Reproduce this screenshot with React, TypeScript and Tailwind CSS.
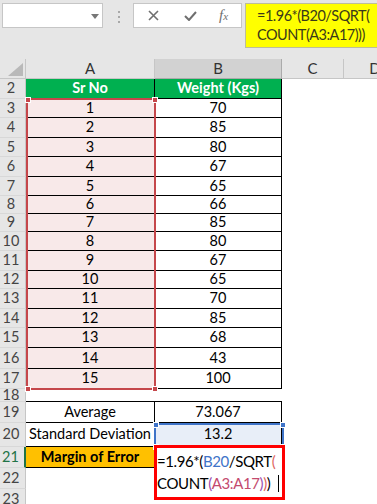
import React from 'react';

const data = [
  { n: 3, h: 19, a: '1', b: '70' },
  { n: 4, h: 20, a: '2', b: '85' },
  { n: 5, h: 19, a: '3', b: '80' },
  { n: 6, h: 20, a: '4', b: '67' },
  { n: 7, h: 19, a: '5', b: '65' },
  { n: 8, h: 18, a: '6', b: '66' },
  { n: 9, h: 18, a: '7', b: '85' },
  { n: 10, h: 19, a: '8', b: '80' },
  { n: 11, h: 20, a: '9', b: '67' },
  { n: 12, h: 18, a: '10', b: '65' },
  { n: 13, h: 20, a: '11', b: '70' },
  { n: 14, h: 19, a: '12', b: '85' },
  { n: 15, h: 20, a: '13', b: '68' },
  { n: 16, h: 21, a: '14', b: '43' },
  { n: 17, h: 20, a: '15', b: '100' },
];

function RowHead({ n, green }: { n: number; green?: boolean }) {
  return (
    <div
      className={`flex h-full w-[26px] shrink-0 items-center justify-center overflow-hidden border-b border-b-[#d8d8d8] bg-[#e6e6e6] pr-[3px] ${
        green ? 'border-r-2 border-r-[#217346] text-[#217346]' : 'border-r border-r-[#c6c6c6] text-[#444]'
      }`}
    >
      {n}
    </div>
  );
}

function Handle({ className }: { className: string }) {
  return <div className={`absolute h-[6px] w-[6px] border border-white ${className}`} />;
}

export default function App() {
  return (
    <div className="relative h-[504px] w-[377px] overflow-hidden bg-white font-[family-name:Lato,'Noto_Sans',sans-serif] text-[14.5px] leading-none text-black">
      {/* formula bar strip */}
      <div className="flex h-[59px] items-start bg-[#e6e6e6] pl-[2px] pt-[3px]">
        <div className="relative h-[25px] w-[101px] shrink-0 border border-[#c6c6c6] bg-white">
          <svg className="absolute left-[88px] top-[10px]" width="8" height="5" viewBox="0 0 8 5">
            <polygon points="0,0 8,0 4,5" fill="#777" />
          </svg>
        </div>
        <div className="ml-[15px] mt-[8px] flex shrink-0 flex-col gap-[3px]">
          <span className="h-[2px] w-[2px] bg-[#a8a8a8]" />
          <span className="h-[2px] w-[2px] bg-[#a8a8a8]" />
          <span className="h-[2px] w-[2px] bg-[#a8a8a8]" />
        </div>
        <div className="ml-[13px] flex h-[25px] w-[109px] shrink-0 items-center border border-[#c6c6c6] bg-white">
          <svg className="ml-[14px]" width="11" height="11" viewBox="0 0 11 11">
            <path d="M1 1 L10 10 M10 1 L1 10" stroke="#6f6f6f" strokeWidth="1.6" />
          </svg>
          <svg className="ml-[25px]" width="13" height="10" viewBox="0 0 13 10">
            <path d="M1 5 L5 9 L12 1" stroke="#6f6f6f" strokeWidth="2" fill="none" />
          </svg>
          <span className="ml-[22px] font-[family-name:'Liberation_Serif',serif] text-[15px] italic text-[#6f6f6f]">
            f<span className="text-[11px]">x</span>
          </span>
        </div>
        <div className="ml-[3px] flex h-[45px] min-w-0 flex-1 flex-col justify-center gap-[5px] whitespace-nowrap border border-r-0 border-[#bdbd9a] bg-[#ffff00] pl-[11px] text-[14.5px] tracking-[-0.5px] text-[#3a3a1a]">
          <span>=1.96*(B20/SQRT(</span>
          <span>COUNT(A3:A17)))</span>
        </div>
      </div>

      {/* column headers */}
      <div className="flex h-[20px] bg-[#e6e6e6] text-[15px] text-[#333]">
        <div className="relative w-[26px] shrink-0 border-r border-b border-[#c6c6c6]">
          <svg className="absolute left-0 top-0" width="26" height="20" viewBox="0 0 26 20">
            <polygon points="8,17 23,17 23,4" fill="#b9b9b9" />
          </svg>
        </div>
        <div className="flex w-[129px] shrink-0 items-center justify-center border-r border-b border-[#c6c6c6]">A</div>
        <div className="flex w-[127px] shrink-0 items-center justify-center border-r border-b border-[#ababab] bg-[#d2d2d2]">B</div>
        <div className="flex w-[62px] shrink-0 items-center justify-center border-r border-b border-[#c6c6c6]">C</div>
        <div className="flex w-[62px] shrink-0 items-center justify-center border-b border-[#c6c6c6]">D</div>
      </div>

      {/* row 2 header */}
      <div className="flex h-[20px]">
        <RowHead n={2} />
        <div className="flex w-[129px] shrink-0 items-center justify-center border-r border-b border-black bg-[#00b050] font-bold text-white">
          Sr No
        </div>
        <div className="flex w-[127px] shrink-0 items-center justify-center border-r border-b border-black bg-[#00b050] font-bold text-white">
          Weight (Kgs)
        </div>
      </div>

      {data.map((r) => (
        <div key={r.n} className="flex" style={{ height: r.h }}>
          <RowHead n={r.n} />
          <div className="flex w-[129px] shrink-0 items-center justify-center border-r border-b border-black bg-[#f8e9e9]">
            {r.a}
          </div>
          <div className="flex w-[127px] shrink-0 items-center justify-center border-r border-b border-black">{r.b}</div>
        </div>
      ))}

      {/* row 18 */}
      <div className="flex h-[13px]">
        <RowHead n={18} />
        <div className="w-[256px] shrink-0 border-b border-black" />
      </div>

      {/* row 19 */}
      <div className="flex h-[21px]">
        <RowHead n={19} />
        <div className="flex w-[129px] shrink-0 items-center justify-center border-r border-b border-black">Average</div>
        <div className="flex w-[127px] shrink-0 items-center justify-center border-r border-b border-black">73.067</div>
      </div>

      {/* row 20 */}
      <div className="flex h-[24px]">
        <RowHead n={20} />
        <div className="flex w-[129px] shrink-0 items-center justify-center whitespace-nowrap border-r border-b border-black">
          Standard Deviation
        </div>
        <div className="flex w-[127px] shrink-0 items-center justify-center border-r border-b border-black bg-[#e8eef8]">13.2</div>
      </div>

      {/* row 21 */}
      <div className="flex h-[21px]">
        <RowHead n={21} green />
        <div className="flex w-[129px] shrink-0 items-center justify-center border-r border-b border-black bg-[#ffc000] font-bold">
          Margin of Error
        </div>
      </div>

      {/* rows 22, 23 */}
      <div className="flex h-[21px]">
        <RowHead n={22} />
      </div>
      <div className="flex h-[21px]">
        <RowHead n={23} />
      </div>

      {/* reference highlight A3:A17 */}
      <div className="pointer-events-none absolute left-[26px] top-[98px] h-[292px] w-[130px] border-2 border-[#c5474b]">
        <Handle className="-left-[3px] -top-[3px] bg-[#c5474b]" />
        <Handle className="-right-[4px] -top-[3px] bg-[#c5474b]" />
        <Handle className="-left-[3px] -bottom-[4px] bg-[#c5474b]" />
        <Handle className="-right-[4px] -bottom-[4px] bg-[#c5474b]" />
      </div>

      {/* reference highlight B20 */}
      <div className="pointer-events-none absolute left-[154px] top-[423px] h-[25px] w-[130px] border-2 border-[#3f74c8]">
        <Handle className="-left-[3px] -top-[3px] bg-[#3f74c8]" />
        <Handle className="-right-[4px] -top-[3px] bg-[#3f74c8]" />
        <Handle className="-left-[3px] -bottom-[4px] bg-[#3f74c8]" />
        <Handle className="-right-[4px] -bottom-[4px] bg-[#3f74c8]" />
      </div>

      {/* in-cell formula editor */}
      <div className="absolute left-[154px] top-[445px] flex h-[55px] w-[131px] flex-col gap-[6px] border-[3px] border-[#ff0000] bg-white pt-[6px] text-[15px] tracking-[-0.4px]">
        <span className="whitespace-nowrap">
          =1.96*(<span className="text-[#3f74c8]">B20</span>/SQRT<span className="text-[#e0675f]">(</span>
        </span>
        <span className="flex items-center whitespace-nowrap">
          COUNT<span className="text-[#9a4fb0]">(</span>
          <span className="text-[#c44a6e]">A3:A17</span>
          <span className="text-[#9a4fb0]">)</span>
          <span className="text-[#e0675f]">)</span>)
          <span className="ml-[8px] h-[17px] w-px bg-black" />
        </span>
      </div>
    </div>
  );
}
